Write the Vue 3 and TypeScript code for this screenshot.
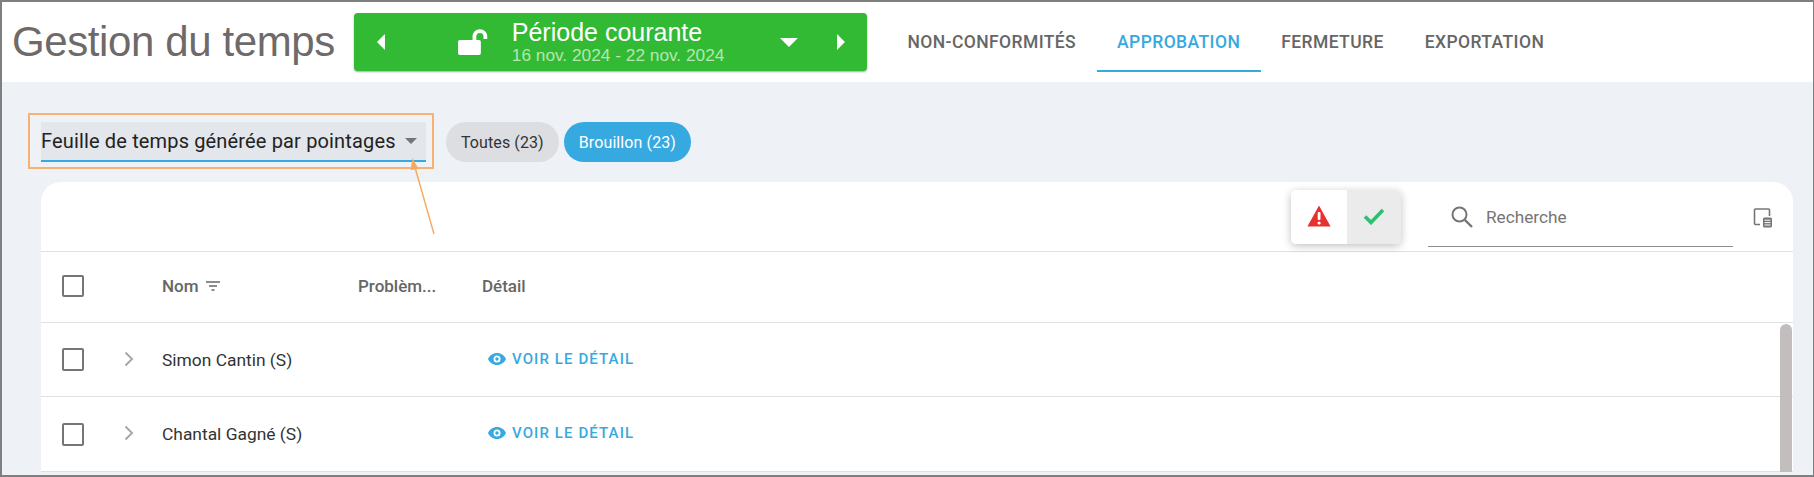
<script setup lang="ts">
const rows: string[] = ['Simon Cantin (S)', 'Chantal Gagné (S)']
const tabs: { label: string; active?: boolean }[] = [
  { label: 'NON-CONFORMITÉS' },
  { label: 'APPROBATION', active: true },
  { label: 'FERMETURE' },
  { label: 'EXPORTATION' },
]
</script>

<template>
  <div class="frame">
    <header class="top">
      <h1 class="title">Gestion du temps</h1>
      <div class="period">
        <svg class="arrow-l" width="10" height="18" viewBox="0 0 10 18"><path d="M9 1v16L1 9z" fill="#fff" /></svg>
        <svg class="lock" width="30" height="28" viewBox="0 0 30 28">
          <rect x="0" y="12" width="23" height="15" rx="2" fill="#fff" />
          <path d="M16.500 13V8.500a5.500 5.500 0 0 1 11 0V11" fill="none" stroke="#fff" stroke-width="3.800" />
        </svg>
        <div class="period-text">
          <div class="period-name">Période courante</div>
          <div class="period-date">16 nov. 2024 - 22 nov. 2024</div>
        </div>
        <svg class="caret-d" width="18" height="10" viewBox="0 0 18 10"><path d="M0 1h18l-9 9z" fill="#fff" /></svg>
        <svg class="arrow-r" width="10" height="18" viewBox="0 0 10 18"><path d="M1 1v16l8-8z" fill="#fff" /></svg>
      </div>
      <nav class="tabs">
        <a v-for="t in tabs" :key="t.label" class="tab" :class="{ active: t.active }">{{ t.label }}</a>
      </nav>
    </header>

    <main class="content">
      <div class="filters">
        <div class="select">
          <span>Feuille de temps générée par pointages</span>
          <svg width="12" height="6" viewBox="0 0 12 6"><path d="M0 0h12L6 6z" fill="#757575" /></svg>
        </div>
        <span class="chip">Toutes (23)</span>
        <span class="chip on">Brouillon (23)</span>
      </div>

      <section class="card">
        <div class="toolbar">
          <div class="toggle">
            <div class="toggle-btn">
              <svg width="24" height="22" viewBox="0 0 24 22">
                <path d="M12 0.500 23.600 21.500H0.400z" fill="#e53230" />
                <rect x="10.700" y="7" width="2.800" height="8" rx="1" fill="#fff" />
                <circle cx="12.100" cy="18" r="1.600" fill="#fff" />
              </svg>
            </div>
            <div class="toggle-btn sel">
              <svg width="22" height="18" viewBox="0 0 22 18"><path d="M2 9.500l6 6L20 3" fill="none" stroke="#2fbf71" stroke-width="3.600" /></svg>
            </div>
          </div>
          <div class="search">
            <svg width="24" height="24" viewBox="0 0 24 24">
              <circle cx="9.500" cy="9.500" r="7" fill="none" stroke="#757575" stroke-width="2" />
              <path d="M14.800 14.800 22 22" stroke="#757575" stroke-width="2.400" />
            </svg>
            <span>Recherche</span>
          </div>
          <svg class="cols" width="20" height="20" viewBox="0 0 20 20">
            <path d="M7 16.500H2.500a1 1 0 0 1-1-1V2a1 1 0 0 1 1-1h13a1 1 0 0 1 1 1v6" fill="none" stroke="#757575" stroke-width="1.600" />
            <rect x="10" y="9.500" width="9" height="10" rx="1.500" fill="#757575" />
            <path d="M11.500 12.200h6M11.500 14.600h6M11.500 17h6" stroke="#fff" stroke-width="1" />
          </svg>
        </div>

        <div class="table">
          <div class="row head">
            <span class="check"></span>
            <span></span>
            <span class="nom">Nom
              <svg width="14" height="10" viewBox="0 0 14 10"><path d="M0 1h14M3 5h8M5.500 9h3" stroke="#666" stroke-width="1.600" /></svg>
            </span>
            <span>Problèm...</span>
            <span>Détail</span>
          </div>
          <div v-for="r in rows" :key="r" class="row body">
            <span class="check"></span>
            <svg class="chev" width="10" height="16" viewBox="0 0 10 16"><path d="M1.500 1.500 8 8l-6.500 6.500" fill="none" stroke="#a8a8a8" stroke-width="2" /></svg>
            <span>{{ r }}</span>
            <span></span>
            <a class="link">
              <svg width="18" height="12" viewBox="0 0 18 12">
                <path fill-rule="evenodd" d="M9 0c4 0 7.400 2.500 9 6-1.600 3.500-5 6-9 6S1.600 9.500 0 6c1.600-3.500 5-6 9-6zm0 2.500a3.500 3.500 0 1 0 0 7 3.500 3.500 0 0 0 0-7zM9 4.300a1.700 1.700 0 1 1 0 3.400 1.700 1.700 0 0 1 0-3.400z" fill="#36a9e1" />
              </svg>
              VOIR LE DÉTAIL
            </a>
          </div>
          <div class="thumb"></div>
        </div>
      </section>
    </main>

    <div class="highlight"></div>
    <svg class="pointer" width="40" height="90" viewBox="0 0 40 90">
      <path d="M30 78 10 8" stroke="#f6a95c" stroke-width="1.400" fill="none" />
      <path d="M8.500 2 14.500 13 6.500 14z" fill="#f6a95c" />
    </svg>
  </div>
</template>

<style>
html, body { margin: 0; padding: 0; }
</style>

<style scoped>
.frame {
  position: relative;
  box-sizing: border-box;
  width: 1814px;
  height: 477px;
  overflow: hidden;
  border: solid #7f7f7f;
  border-width: 2px 1px 2px 2px;
  background: #eef1f6;
  font-family: Roboto, "Liberation Sans", sans-serif;
}
.top {
  display: flex;
  align-items: flex-start;
  height: 80px;
  background: #fff;
}
.title {
  margin: 15px 0 0 10px;
  width: 342px;
  flex: none;
  font: 400 42px/50px "Liberation Sans", Arial, sans-serif;
  letter-spacing: -0.4px;
  color: #6d6a69;
  white-space: nowrap;
}
.period {
  display: flex;
  align-items: center;
  flex: none;
  box-sizing: border-box;
  width: 513px;
  height: 58px;
  margin-top: 11px;
  padding: 0 21px 0 22px;
  border-radius: 4px;
  background: #32ba35;
  box-shadow: 0 1px 2px rgba(0, 0, 0, .35);
  font-family: "Liberation Sans", Arial, sans-serif;
}
.arrow-l { margin-right: 72px; }
.lock { margin: -1px 24px 0 0; }
.period-text { width: 270px; }
.period-name { font-size: 25px; line-height: 26px; color: #fff; }
.period-date { font-size: 17.300px; line-height: 20px; color: #b5e6b1; }
.caret-d { margin-right: 38px; }
.tabs { display: flex; margin-left: 20px; }
.tab {
  box-sizing: border-box;
  height: 70px;
  padding: 0 20.500px;
  line-height: 80px;
  font-size: 17.500px;
  font-weight: 500;
  letter-spacing: 0.4px;
  color: #666;
  white-space: nowrap;
}
.tab.active { color: #36a9e1; border-bottom: 2px solid #36a9e1; }
.content { padding: 40px 20px 0 39px; }
.filters { display: flex; align-items: center; gap: 5px; height: 40px; }
.select {
  display: flex;
  align-items: center;
  justify-content: space-between;
  box-sizing: border-box;
  width: 385px;
  height: 40px;
  margin-right: 15px;
  padding-right: 9px;
  border-bottom: 2px solid #36a9e1;
  background: #e3e6eb;
  font-size: 20px;
  font-weight: 400;
  letter-spacing: 0.15px;
  color: #222;
  white-space: nowrap;
}
.chip {
  display: flex;
  align-items: center;
  height: 40px;
  padding: 0 15px;
  border-radius: 20px;
  background: #dcdee2;
  font-size: 16px;
  letter-spacing: 0.1px;
  color: #333;
  white-space: nowrap;
}
.chip.on { background: #36a9e1; color: #fff; }
.card {
  margin-top: 20px;
  border-radius: 20px 20px 0 0;
  background: #fff;
  overflow: hidden;
}
.toolbar {
  display: flex;
  align-items: center;
  height: 69px;
  border-bottom: 1px solid #e0e0e0;
}
.toggle {
  display: flex;
  margin: 1px 27px 0 auto;
  height: 54px;
  border-radius: 5px;
  overflow: hidden;
  box-shadow: 0 2px 8px rgba(0, 0, 0, .25);
}
.toggle-btn {
  display: flex;
  align-items: center;
  justify-content: center;
  width: 56px;
  background: #fff;
}
.toggle-btn svg { margin-top: -2px; }
.toggle-btn.sel { width: 54px; background: #ebebeb; }
.search {
  display: flex;
  align-items: center;
  align-self: flex-start;
  box-sizing: border-box;
  width: 305px;
  height: 63px;
  margin: 2px 20px 0 0;
  padding: 4px 0 0 22px;
  border-bottom: 1.500px solid #8c8c8c;
  gap: 12px;
  font-size: 17.200px;
  color: #757575;
}
.cols { flex: none; margin: 2px 20px 0 0; }
.table { position: relative; }
.row {
  display: grid;
  grid-template-columns: 63px 37px 196px 124px 1fr;
  align-items: center;
  box-sizing: border-box;
  padding-left: 21px;
  border-bottom: 1px solid #e0e0e0;
  font-size: 17.400px;
}
.head { height: 71px; font-size: 17px; font-weight: 500; color: #666; }
.head > span { margin-top: -2px; }
.body { height: 74.400px; color: #333; }
.body .check { height: 23px; }
.check {
  box-sizing: border-box;
  width: 22px;
  height: 22px;
  border: 2px solid #757575;
  border-radius: 2px;
}
.nom { display: flex; align-items: center; gap: 7px; }
.chev { margin: -2px 0 0 -1px; }
.link {
  display: flex;
  align-items: center;
  gap: 6px;
  margin: -2px 0 0 6px;
  font-size: 15px;
  font-weight: 500;
  letter-spacing: 1.100px;
  color: #36a9e1;
}
.thumb {
  position: absolute;
  top: 72px;
  right: 1px;
  width: 12px;
  height: 200px;
  border-radius: 6px 6px 0 0;
  background: #c2bebe;
}
.highlight {
  position: absolute;
  left: 26px;
  top: 111px;
  box-sizing: border-box;
  width: 406px;
  height: 56px;
  border: 2px solid #f9b16f;
}
.pointer {
  position: absolute;
  left: 402px;
  top: 154px;
}
</style>
